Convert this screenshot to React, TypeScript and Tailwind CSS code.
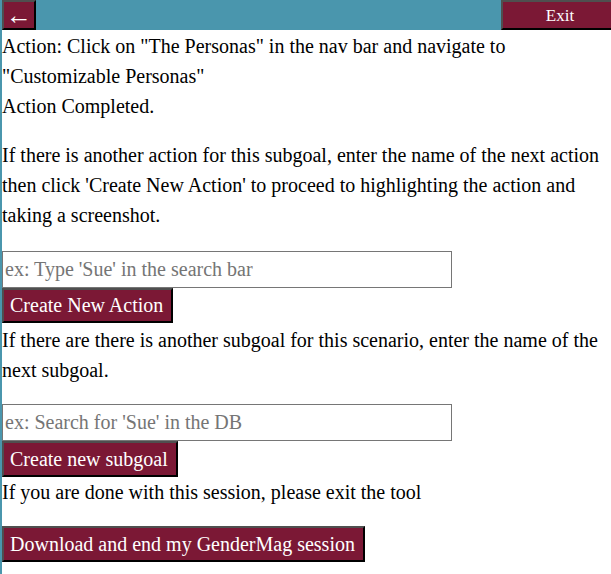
import { useState } from 'react'

const serif = { fontFamily: '"Liberation Serif", "Times New Roman", serif' }

function MaroonButton({ children, className = '' }: { children: React.ReactNode; className?: string }) {
  return (
    <button
      className={`block bg-[#7b1835] text-white text-[20px] leading-[23px] pl-[6px] pr-[8px] border-2 border-t-[#4f4f4f] border-l-[#4f4f4f] border-b-black border-r-black ${className}`}
    >
      {children}
    </button>
  )
}

export default function App() {
  const [action, setAction] = useState('')
  const [subgoal, setSubgoal] = useState('')

  return (
    <div className="min-h-[574px] w-[611px] bg-white border-l-2 border-[#4a96ad] text-black" style={serif}>
      {/* top bar */}
      <div className="flex justify-between items-stretch h-[30px] bg-[#4a96ad] -ml-[2px] pl-[2px]">
        <button className="w-[34px] bg-[#7b1835] text-white text-[26px] leading-none pt-[1px] border-2 border-t-[#4f4f4f] border-l-[#4f4f4f] border-b-black border-r-black">
          ←
        </button>
        <button className="w-[110px] bg-[#7b1835] text-white text-[17px] leading-none pl-[6px] border-2 border-t-[#4f4f4f] border-l-[#4f4f4f] border-b-black border-r-0">
          Exit
        </button>
      </div>

      <div className="text-[20px] leading-[30px] pt-[1px]">
        <div>Action: Click on "The Personas" in the nav bar and navigate to "Customizable Personas"</div>
        <div>Action Completed.</div>

        <p className="mt-[19px]">
          If there is another action for this subgoal, enter the name of the next action then click 'Create New
          Action' to proceed to highlighting the action and taking a screenshot.
        </p>

        <input
          value={action}
          onChange={(e) => setAction(e.target.value)}
          placeholder="ex: Type 'Sue' in the search bar"
          className="block mt-[21px] w-[450px] h-[37px] px-[2px] border border-[#767676] text-[20px] placeholder:text-[#757575]"
          style={serif}
        />
        <MaroonButton className="h-[35px]">Create New Action</MaroonButton>

        <p className="mt-[2px]">
          If there are there is another subgoal for this scenario, enter the name of the next subgoal.
        </p>

        <input
          value={subgoal}
          onChange={(e) => setSubgoal(e.target.value)}
          placeholder="ex: Search for 'Sue' in the DB"
          className="block mt-[19px] w-[450px] h-[37px] px-[2px] border border-[#767676] text-[20px] placeholder:text-[#757575]"
          style={serif}
        />
        <MaroonButton className="h-[36px]">Create new subgoal</MaroonButton>

        <p>If you are done with this session, please exit the tool</p>

        <MaroonButton className="mt-[19px] h-[36px]">Download and end my GenderMag session</MaroonButton>
      </div>
    </div>
  )
}
